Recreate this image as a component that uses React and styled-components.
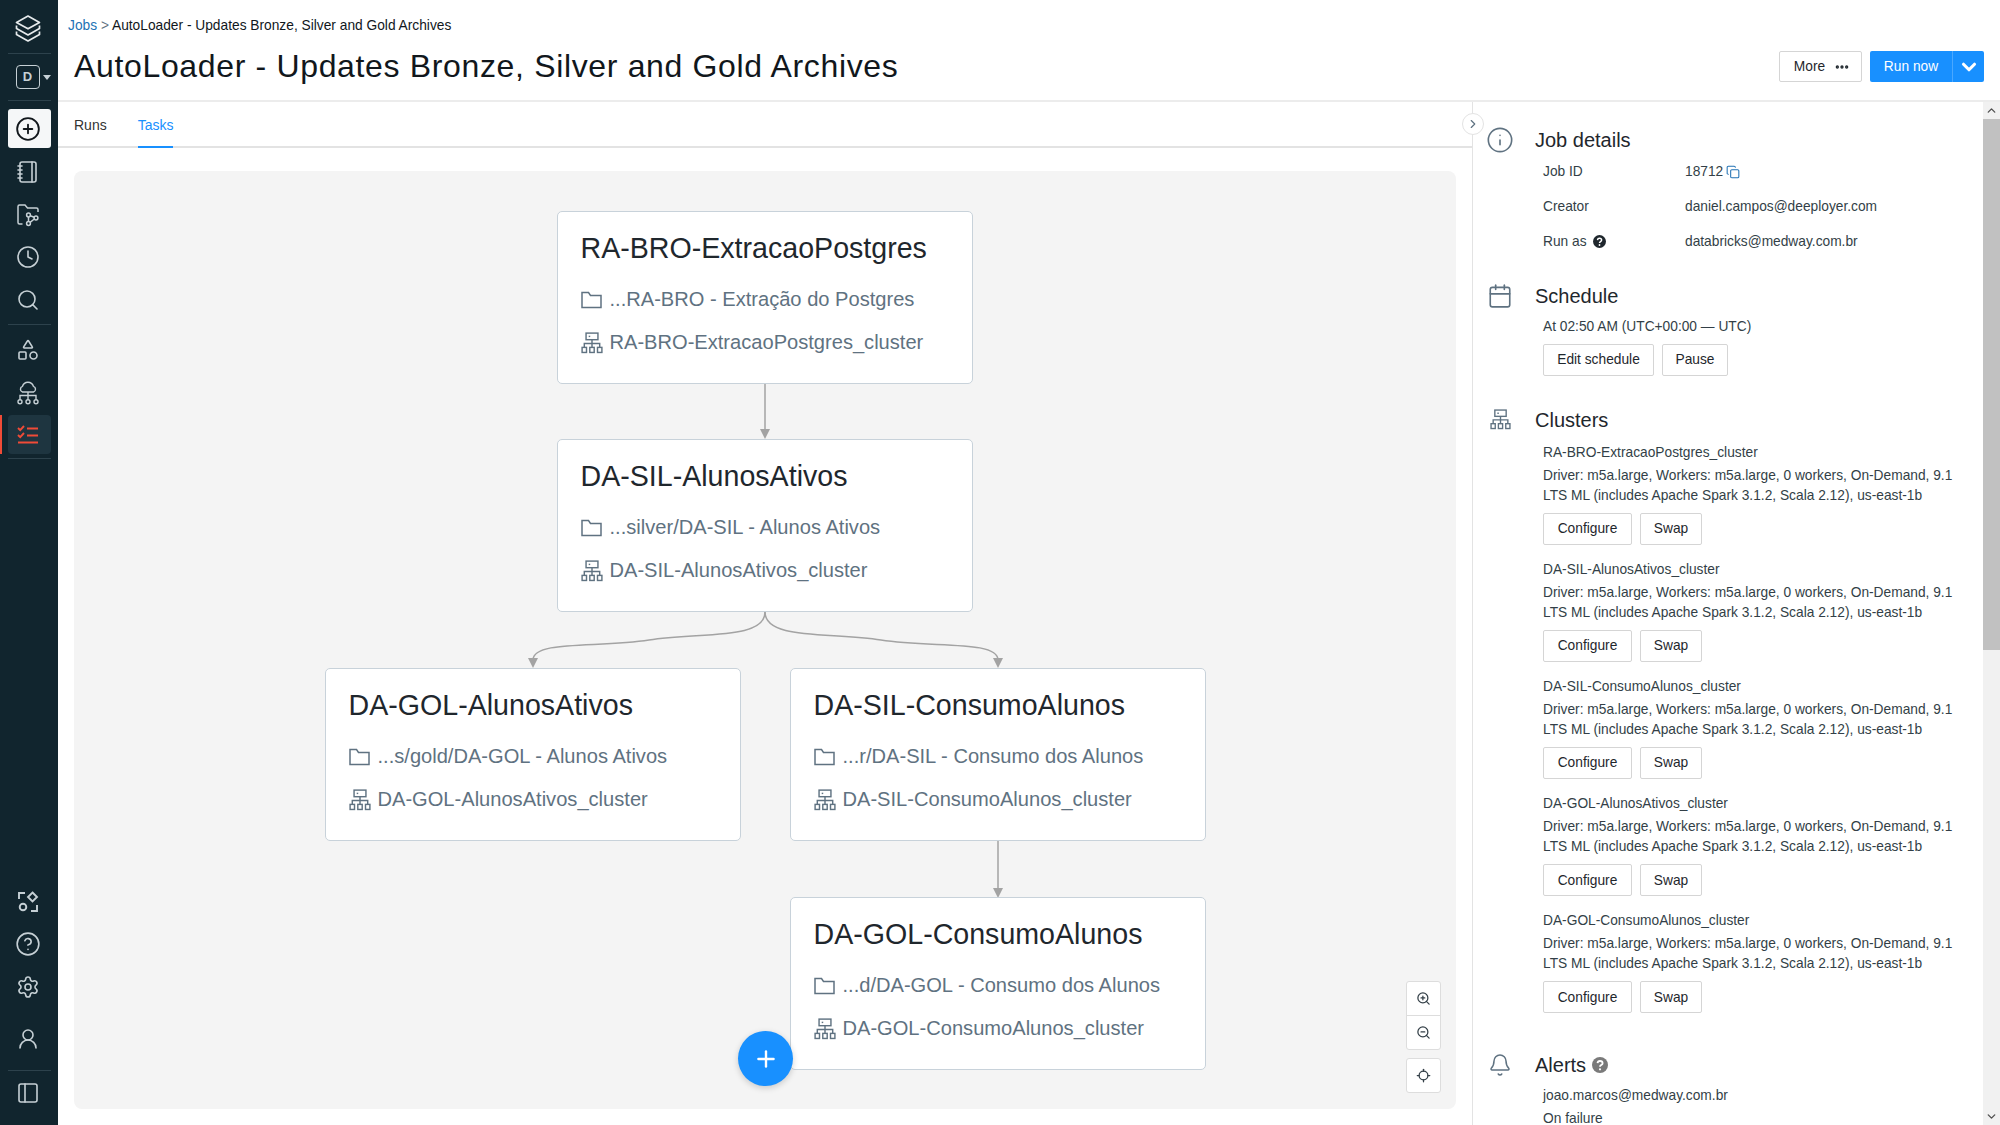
import React from 'react';
import styled, { createGlobalStyle } from 'styled-components';
import {
	ChevronDown,
	ChevronRight,
	ChevronUp,
	CircleHelp,
	CirclePlus,
	Clock,
	Info,
	Locate,
	MoreHorizontal,
	Notebook,
	Plus,
	Search,
	Settings,
	Shapes,
	UserRound,
	ZoomIn,
	ZoomOut,
	Calendar,
	Bell,
	Copy,
	PanelLeft
} from 'lucide-react';

const NODES = [
	{ name: 'RA-BRO-ExtracaoPostgres', path: '...RA-BRO - Extração do Postgres', x: 483, y: 40 },
	{ name: 'DA-SIL-AlunosAtivos', path: '...silver/DA-SIL - Alunos Ativos', x: 483, y: 268 },
	{ name: 'DA-GOL-AlunosAtivos', path: '...s/gold/DA-GOL - Alunos Ativos', x: 251, y: 497 },
	{ name: 'DA-SIL-ConsumoAlunos', path: '...r/DA-SIL - Consumo dos Alunos', x: 716, y: 497 },
	{ name: 'DA-GOL-ConsumoAlunos', path: '...d/DA-GOL - Consumo dos Alunos', x: 716, y: 726 }
];

const CLUSTERS = [
	'RA-BRO-ExtracaoPostgres_cluster',
	'DA-SIL-AlunosAtivos_cluster',
	'DA-SIL-ConsumoAlunos_cluster',
	'DA-GOL-AlunosAtivos_cluster',
	'DA-GOL-ConsumoAlunos_cluster'
];

const GlobalStyle = createGlobalStyle`
	html, body {
		margin: 0;
		padding: 0;
		height: 100%;
		overflow: hidden;
		background: #fff;
		font-family: "Liberation Sans", Arial, sans-serif;
	}
	* {
		box-sizing: border-box;
	}
`;

const ClusterIcon = ({ size = 22, color = 'currentColor' }) => (
	<svg width={size} height={size} viewBox="0 0 20 20" fill="none" stroke={color} strokeWidth="1.3">
		<rect x="4.6" y="1" width="10.8" height="6" />
		<path d="M7 4h1.4" />
		<path d="M10 7v3.4M3 14v-3.6h14V14M10 10.4V14" />
		<rect x="1" y="14" width="4" height="4.6" />
		<rect x="8" y="14" width="4" height="4.6" />
		<rect x="15" y="14" width="4" height="4.6" />
	</svg>
);

const FolderIcon = () => (
	<svg width="22" height="18" viewBox="0 0 22 18" fill="none" stroke="currentColor" strokeWidth="1.5">
		<path d="M1 16.5V1.5h6.5l2 3H20v12Z" />
	</svg>
);

const LogoIcon = () => (
	<svg width="26" height="28" viewBox="0 0 26 28" fill="none" stroke="#e6eaec" strokeWidth="1.7" strokeLinejoin="round">
		<path d="M13 2 24.5 8.4 13 14.8 1.5 8.4Z" />
		<path d="M1.5 11.5v3L13 21l11.5-6.5v-3" />
		<path d="M1.5 17.5v3L13 27l11.5-6.5v-3" />
	</svg>
);

const RepoIcon = () => (
	<svg width="24" height="24" viewBox="0 0 24 24" fill="none" stroke="currentColor" strokeWidth="1.5">
		<path d="M6.5 21H3.5A1.5 1.5 0 0 1 2 19.5V3.5A1.5 1.5 0 0 1 3.5 2H9l2.5 3h9A1.5 1.5 0 0 1 22 6.5V9" />
		<circle cx="12.5" cy="12" r="1.9" />
		<circle cx="12.5" cy="20.5" r="1.9" />
		<circle cx="20" cy="15" r="1.9" />
		<path d="M12.5 14v4.5M14.3 12.8l3.9 1.5M18.3 16l-4.2 3.3" />
	</svg>
);

const CloudTreeIcon = () => (
	<svg width="24" height="24" viewBox="0 0 24 24" fill="none" stroke="currentColor" strokeWidth="1.4">
		<path d="M6.5 11A3 3 0 0 1 6.5 5.3 5.7 5.7 0 0 1 17.4 5.3 3 3 0 0 1 17.5 11H6.5Z" />
		<path d="M12 11V18.5M4 18.5V14.5H20V18.5" />
		<circle cx="4" cy="20.7" r="2" />
		<circle cx="12" cy="20.7" r="2" />
		<circle cx="20" cy="20.7" r="2" />
	</svg>
);

const TasksIcon = () => (
	<svg width="22" height="20" viewBox="0 0 22 20" fill="none" stroke="#f04b37" strokeWidth="1.9">
		<path d="m1 3 2.2 2.2L7 1M1 10l2.2 2.2L7 8" />
		<path d="M10 3.5h11M10 10.5h11M1 17.5h20" />
	</svg>
);

const PartnerIcon = () => (
	<svg width="22" height="22" viewBox="0 0 22 22" fill="none" stroke="currentColor" strokeWidth="1.9">
		<path d="M8 2H2v6M20 14v6h-6" />
		<path d="M15.5 1.5 20 6l-4.5 4.5L11 6Z" />
		<circle cx="6" cy="16" r="3.3" />
	</svg>
);

const HelpDot = ({ size = 13, color = '#1f272d' }) => (
	<svg width={size} height={size} viewBox="0 0 16 16">
		<circle cx="8" cy="8" r="8" fill={color} />
		<path d="M5.5 6.2A2.5 2.5 0 0 1 8 4c1.5 0 2.6 1 2.6 2.2 0 1.9-2.6 1.9-2.6 3.5" fill="none" stroke="#fff" strokeWidth="1.8" />
		<circle cx="8" cy="12.3" r="1.1" fill="#fff" />
	</svg>
);

const TaskNode = ({ node }) => (
	<Node $x={node.x} $y={node.y}>
		<NodeTitle>{node.name}</NodeTitle>
		<NodeRow>
			<FolderIcon />
			{node.path}
		</NodeRow>
		<NodeRow>
			<ClusterIcon />
			{node.name}_cluster
		</NodeRow>
	</Node>
);

const App = () => {
	return (
		<Page>
			<GlobalStyle />
			<Sidebar>
				<SideItem><LogoIcon /></SideItem>
				<SideDivider $top={3} $bottom={2} />
				<SideItem>
					<WorkspaceBadge>D</WorkspaceBadge>
					<WorkspaceCaret />
				</SideItem>
				<SideDivider $top={2} $bottom={8} />
				<CreateItem><CirclePlus size={26} strokeWidth={1.7} /></CreateItem>
				<SideItem><Notebook size={24} strokeWidth={1.6} /></SideItem>
				<SideItem><RepoIcon /></SideItem>
				<SideItem><Clock size={24} strokeWidth={1.6} /></SideItem>
				<SideItem><Search size={24} strokeWidth={1.6} /></SideItem>
				<SideDivider $top={3} $bottom={4} />
				<SideItem><Shapes size={24} strokeWidth={1.6} /></SideItem>
				<SideItem><CloudTreeIcon /></SideItem>
				<ActiveItem><TasksIcon /></ActiveItem>
				<SideDivider $top={4} $bottom={0} />
				<SideSpacer />
				<SideItem><PartnerIcon /></SideItem>
				<SideItem><CircleHelp size={26} strokeWidth={1.5} /></SideItem>
				<SideItem><Settings size={24} strokeWidth={1.6} /></SideItem>
				<UserItem><UserRound size={24} strokeWidth={1.6} /></UserItem>
				<SideDivider $top={10} $bottom={1} />
				<SideItem><PanelLeft size={24} strokeWidth={1.6} /></SideItem>
			</Sidebar>

			<Main>
				<Header>
					<HeaderText>
						<Breadcrumb><CrumbLink>Jobs</CrumbLink> <CrumbSep>&gt;</CrumbSep> AutoLoader - Updates Bronze, Silver and Gold Archives</Breadcrumb>
						<Title>AutoLoader - Updates Bronze, Silver and Gold Archives</Title>
					</HeaderText>
					<HeaderActions>
						<MoreButton>More <MoreHorizontal size={16} strokeWidth={3} /></MoreButton>
						<RunGroup>
							<RunButton>Run now</RunButton>
							<RunCaret><ChevronDown size={22} strokeWidth={3.4} /></RunCaret>
						</RunGroup>
					</HeaderActions>
				</Header>

				<Body>
					<LeftColumn>
						<Tabs>
							<Tab>Runs</Tab>
							<Tab $active>Tasks</Tab>
						</Tabs>
						<CanvasWrap>
							<Canvas>
								<Edges width="1382" height="938" viewBox="0 0 1382 938" fill="none" stroke="#a3a3a3" strokeWidth="1.5">
									<g transform="translate(-74 -171)">
										<path d="M765 383V430" />
										<path d="M765 612C765 640 700 632 649 640S533 640 533 660" />
										<path d="M765 612C765 640 830 632 881 640S998 640 998 660" />
										<path d="M998 840V888" />
										<g fill="#a3a3a3" stroke="none">
											<path d="M760 429h10l-5 10Z" />
											<path d="M528 658h10l-5 10Z" />
											<path d="M993 658h10l-5 10Z" />
											<path d="M993 888h10l-5 10Z" />
										</g>
									</g>
								</Edges>
								{NODES.map(node => (
									<TaskNode key={node.name} node={node} />
								))}
								<AddButton><Plus size={26} strokeWidth={2.2} /></AddButton>
								<ZoomControls>
									<ZoomGroup>
										<ZoomButton><ZoomIn size={15} strokeWidth={2} /></ZoomButton>
										<ZoomButton><ZoomOut size={15} strokeWidth={2} /></ZoomButton>
									</ZoomGroup>
									<ZoomGroup>
										<ZoomButton><Locate size={15} strokeWidth={2} /></ZoomButton>
									</ZoomGroup>
								</ZoomControls>
							</Canvas>
						</CanvasWrap>
					</LeftColumn>

					<Panel>
						<CollapseButton><ChevronRight size={14} strokeWidth={2} /></CollapseButton>
						<PanelInner>
							<Section $gap={24.5}>
								<SectionIcon><Info size={28} strokeWidth={1.4} /></SectionIcon>
								<SectionBody>
									<SectionTitle>Job details</SectionTitle>
									<DetailRow>
										<DetailLabel>Job ID</DetailLabel>
										<DetailValue>18712 <Copy size={14} color="#2272b4" strokeWidth={1.8} /></DetailValue>
									</DetailRow>
									<DetailRow>
										<DetailLabel>Creator</DetailLabel>
										<DetailValue>daniel.campos@deeployer.com</DetailValue>
									</DetailRow>
									<DetailRow>
										<DetailLabel>Run as <HelpDot /></DetailLabel>
										<DetailValue>databricks@medway.com.br</DetailValue>
									</DetailRow>
								</SectionBody>
							</Section>

							<Section $gap={32}>
								<SectionIcon><Calendar size={26} strokeWidth={1.5} /></SectionIcon>
								<SectionBody>
									<SectionTitle>Schedule</SectionTitle>
									<BodyText $top={10}>At 02:50 AM (UTC+00:00 — UTC)</BodyText>
									<ButtonRow $top={8}>
										<OutlineButton $width={111}>Edit schedule</OutlineButton>
										<OutlineButton $width={66}>Pause</OutlineButton>
									</ButtonRow>
								</SectionBody>
							</Section>

							<Section $gap={34}>
								<SectionIcon><ClusterIcon size={21} color="#5f7281" /></SectionIcon>
								<SectionBody>
									<SectionTitle>Clusters</SectionTitle>
									{CLUSTERS.map(name => (
										<ClusterBlock key={name}>
											<BodyText>{name}</BodyText>
											<ClusterDesc>Driver: m5a.large, Workers: m5a.large, 0 workers, On-Demand, 9.1 LTS ML (includes Apache Spark 3.1.2, Scala 2.12), us-east-1b</ClusterDesc>
											<ButtonRow $top={7}>
												<OutlineButton $width={89}>Configure</OutlineButton>
												<OutlineButton $width={62}>Swap</OutlineButton>
											</ButtonRow>
										</ClusterBlock>
									))}
								</SectionBody>
							</Section>

							<Section $gap={0}>
								<SectionIcon><Bell size={24} strokeWidth={1.5} /></SectionIcon>
								<SectionBody>
									<SectionTitle>Alerts <HelpDot size={16} color="#7a7a7a" /></SectionTitle>
									<BodyText $top={10}>joao.marcos@medway.com.br</BodyText>
									<BodyText $top={5}>On failure</BodyText>
								</SectionBody>
							</Section>
						</PanelInner>
						<Scrollbar>
							<ScrollArrow><ChevronUp size={13} strokeWidth={2.5} /></ScrollArrow>
							<ScrollThumb />
							<ScrollArrow><ChevronDown size={13} strokeWidth={2.5} /></ScrollArrow>
						</Scrollbar>
					</Panel>
				</Body>
			</Main>
		</Page>
	);
};
export default App;

const Page = styled.div`
	display: flex;
	width: 2000px;
	height: 1125px;
	overflow: hidden;
	background: #fff;
	color: #1f272d;
`;

const Sidebar = styled.nav`
	display: flex;
	flex-direction: column;
	align-items: center;
	width: 58px;
	height: 100%;
	flex: none;
	padding: 7px 0 10.75px;
	background: #11252e;
	color: #c6d0d5;
`;
const SideItem = styled.div`
	position: relative;
	display: flex;
	align-items: center;
	justify-content: center;
	flex: none;
	width: 43px;
	height: 42.5px;
	padding-right: 3px;
	margin-left: 1px;
`;
const CreateItem = styled(SideItem)`
	height: 39px;
	margin-bottom: 3px;
	background: #f5f7f8;
	border-radius: 3px;
	color: #11171c;
`;
const ActiveItem = styled(SideItem)`
	height: 39px;
	margin-top: 1px;
	background: #1e3540;
	border-radius: 4px;

	&::before {
		content: '';
		position: absolute;
		left: -8px;
		top: 0;
		width: 2px;
		height: 100%;
		background: #f04b37;
	}
`;
const UserItem = styled(SideItem)`
	margin-top: 9.5px;
`;
const SideDivider = styled.div`
	flex: none;
	width: 43px;
	height: 1px;
	margin: ${props => props.$top}px 0 ${props => props.$bottom}px 1px;
	background: #2d424c;
`;
const SideSpacer = styled.div`
	flex: 1;
`;
const WorkspaceBadge = styled.div`
	display: flex;
	align-items: center;
	justify-content: center;
	width: 24px;
	height: 24px;
	margin-left: -1px;
	border: 1.5px solid #c6d0d5;
	border-radius: 4px;
	font-size: 13px;
	font-weight: bold;
`;
const WorkspaceCaret = styled.span`
	position: absolute;
	right: 0;
	top: 19px;
	border: 4px solid transparent;
	border-top: 5px solid #c6d0d5;
`;

const Main = styled.div`
	display: flex;
	flex-direction: column;
	flex: 1;
	min-width: 0;
`;
const Header = styled.header`
	display: flex;
	align-items: flex-start;
	justify-content: space-between;
	flex: none;
	height: 102px;
	padding: 18px 16px 0 10px;
	border-bottom: 2px solid #ececec;
`;
const HeaderText = styled.div`
	display: flex;
	flex-direction: column;
`;
const Breadcrumb = styled.div`
	font-size: 13.75px;
	line-height: 16px;
	color: #11171c;
`;
const CrumbLink = styled.a`
	color: #2272b4;
`;
const CrumbSep = styled.span`
	color: #5f7281;
`;
const Title = styled.h1`
	margin: 8px 0 0 6px;
	font-size: 32px;
	font-weight: normal;
	line-height: 48px;
	letter-spacing: 0.655px;
	color: #11171c;
`;
const HeaderActions = styled.div`
	display: flex;
	gap: 8px;
	margin-top: 33px;
`;
const MoreButton = styled.button`
	display: flex;
	align-items: center;
	justify-content: center;
	gap: 9px;
	width: 83px;
	height: 31px;
	padding: 0 0 0 3px;
	background: #fff;
	border: 1px solid #d5d5d5;
	border-radius: 2px;
	font-family: inherit;
	font-size: 13.75px;
	color: #1f272d;
`;
const RunGroup = styled.div`
	display: flex;
	height: 31px;
	border-radius: 2px;
	overflow: hidden;
	background: #1890ff;
	color: #fff;
`;
const RunButton = styled.button`
	width: 83px;
	padding: 0;
	background: none;
	border: 0;
	border-right: 1px solid #4aa8ff;
	font-family: inherit;
	font-size: 13.75px;
	color: inherit;
`;
const RunCaret = styled.span`
	display: flex;
	align-items: center;
	justify-content: center;
	width: 31px;
`;

const Body = styled.div`
	display: flex;
	flex: 1;
	min-height: 0;
`;
const LeftColumn = styled.div`
	display: flex;
	flex-direction: column;
	width: 1414px;
	flex: none;
`;
const Tabs = styled.div`
	display: flex;
	flex: none;
	gap: 31px;
	height: 46px;
	padding-left: 16px;
	border-bottom: 2px solid #e3e3e3;
`;
const Tab = styled.div`
	height: 46px;
	padding-top: 15px;
	font-size: 14px;
	line-height: 16px;
	color: ${props => (props.$active ? '#1890ff' : '#333')};
	border-bottom: ${props => (props.$active ? '2px solid #1890ff' : '0')};
`;
const CanvasWrap = styled.div`
	flex: 1;
	padding: 23px 16px 16px 16px;
`;
const Canvas = styled.div`
	position: relative;
	width: 100%;
	height: 100%;
	background: #f4f4f4;
	border-radius: 8px;
`;
const Edges = styled.svg`
	position: absolute;
	left: 0;
	top: 0;
`;
const Node = styled.div`
	position: absolute;
	left: ${props => props.$x}px;
	top: ${props => props.$y}px;
	width: 416px;
	height: 173px;
	padding: 19px 22.5px 0;
	background: #fff;
	border: 1.5px solid #c8d2da;
	border-radius: 5px;
`;
const NodeTitle = styled.div`
	margin-bottom: 13px;
	font-size: 28.6px;
	line-height: 34px;
	white-space: nowrap;
	color: #1f272d;
`;
const NodeRow = styled.div`
	display: flex;
	align-items: center;
	gap: 7px;
	height: 43px;
	font-size: 20.1px;
	white-space: nowrap;
	color: #5f7281;
`;
const AddButton = styled.div`
	position: absolute;
	left: 664px;
	top: 860px;
	display: flex;
	align-items: center;
	justify-content: center;
	width: 55px;
	height: 55px;
	background: #1890ff;
	border-radius: 50%;
	box-shadow: 0 2px 6px rgba(0, 0, 0, 0.18);
	color: #fff;
`;
const ZoomControls = styled.div`
	position: absolute;
	right: 15px;
	bottom: 16px;
	display: flex;
	flex-direction: column;
	gap: 8px;
`;
const ZoomGroup = styled.div`
	display: flex;
	flex-direction: column;
	width: 35px;
	background: #fff;
	border: 1px solid #dddddd;
	border-radius: 3px;
`;
const ZoomButton = styled.div`
	display: flex;
	align-items: center;
	justify-content: center;
	height: 33.5px;
	color: #333f47;

	& + & {
		border-top: 1px solid #dddddd;
	}
`;

const Panel = styled.aside`
	position: relative;
	display: flex;
	flex: 1;
	min-width: 0;
	border-left: 1px solid #e3e3e3;
`;
const CollapseButton = styled.div`
	position: absolute;
	left: -11px;
	top: 11px;
	display: flex;
	align-items: center;
	justify-content: center;
	width: 22px;
	height: 22px;
	background: #fff;
	border: 1px solid #e3e3e3;
	border-radius: 50%;
	color: #5f7281;
`;
const PanelInner = styled.div`
	flex: 1;
	min-width: 0;
	padding: 26px 0 0 13px;
	overflow: hidden;
`;
const Section = styled.section`
	display: flex;
	margin-bottom: ${props => props.$gap}px;
`;
const SectionIcon = styled.div`
	flex: none;
	display: flex;
	align-items: center;
	justify-content: center;
	width: 28px;
	height: 24px;
	margin-right: 21px;
	color: #5f7281;
`;
const SectionBody = styled.div`
	flex: 1;
	min-width: 0;
`;
const SectionTitle = styled.h2`
	display: flex;
	align-items: center;
	gap: 6px;
	margin: 0 0 2px;
	font-size: 20px;
	font-weight: normal;
	line-height: 24px;
	color: #1f272d;
`;
const DetailRow = styled.div`
	display: flex;
	align-items: center;
	height: 35px;
	padding-left: 8px;
	font-size: 13.75px;
`;
const DetailLabel = styled.div`
	display: flex;
	align-items: center;
	gap: 6px;
	width: 142px;
	flex: none;
	color: #333f47;
`;
const DetailValue = styled.div`
	display: flex;
	align-items: center;
	gap: 3px;
	color: #333f47;
`;
const BodyText = styled.div`
	margin: ${props => props.$top || 0}px 0 0 8px;
	font-size: 13.75px;
	line-height: 18px;
	color: #333f47;
`;
const ClusterBlock = styled.div`
	padding: 10px 0 6.2px;
`;
const ClusterDesc = styled.div`
	margin: 4px 0 0 8px;
	width: 420px;
	font-size: 13.75px;
	line-height: 20px;
	color: #333f47;
`;
const ButtonRow = styled.div`
	display: flex;
	gap: 8px;
	margin: ${props => props.$top}px 0 0 8px;
`;
const OutlineButton = styled.button`
	width: ${props => props.$width}px;
	height: 32px;
	padding: 0;
	background: #fff;
	border: 1px solid #d5d5d5;
	border-radius: 2px;
	font-family: inherit;
	font-size: 13.75px;
	color: #1f272d;
`;
const Scrollbar = styled.div`
	display: flex;
	flex-direction: column;
	flex: none;
	width: 17px;
	background: #f1f1f1;
`;
const ScrollArrow = styled.div`
	display: flex;
	align-items: center;
	justify-content: center;
	flex: none;
	height: 17px;
	color: #505050;
`;
const ScrollThumb = styled.div`
	flex: none;
	height: 531px;
	background: #c1c1c1;
	margin-bottom: auto;
`;
